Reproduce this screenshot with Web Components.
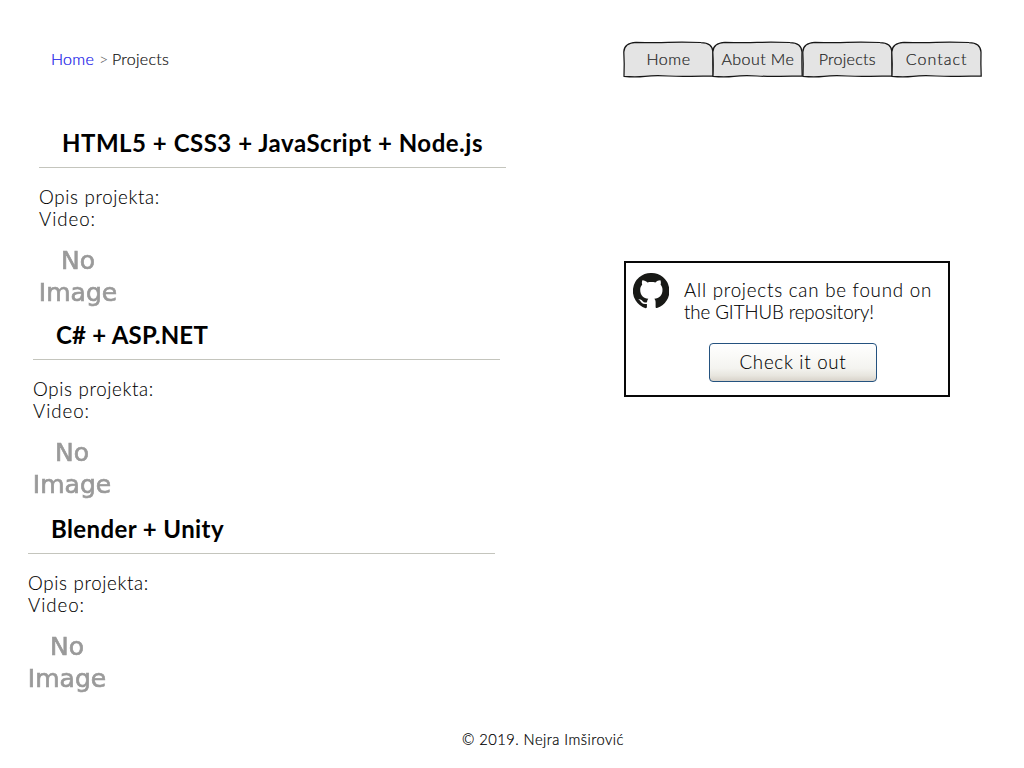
<!DOCTYPE html>
<html lang="en">
<head>
<meta charset="utf-8">
<title>Projects</title>
<style>
html,body{margin:0;background:#fff;color:#000;font-family:"Century Gothic",Lato,sans-serif;font-weight:300}
</style>
</head>
<body>
<projects-page></projects-page>
<script>
const define = (name, html, setup) => customElements.define(name, class extends HTMLElement {
  connectedCallback() {
    if (this.shadowRoot) return;
    this.attachShadow({ mode: 'open' }).innerHTML = html;
    if (setup) setup(this, this.shadowRoot);
  }
});

// A line of text whose tracking is adjusted so that it fills the given measure.
define('tracked-text', `<style>:host{display:inline-block;white-space:nowrap}span{display:inline-block}</style><span></span>`, (el, root) => {
  const s = root.querySelector('span');
  s.textContent = el.getAttribute('text');
  const w = Number(el.getAttribute('measure'));
  const natural = s.getBoundingClientRect().width;
  s.style.letterSpacing = (w - natural) / s.textContent.length + 'px';
  el.style.width = w + 'px';
});

define('nav-tab', `<style>
:host{display:block;width:89.4px;height:36px;flex:none}
div{display:grid;height:36px}
svg,span{grid-area:1/1}
svg{width:91px;height:36px;overflow:visible}
span{display:flex;justify-content:center;height:36px;line-height:36px;font-size:16px;font-weight:300;-webkit-text-stroke:.2px #222;color:#222;z-index:1}
</style><div><svg viewBox="0 0 91 36"><path d="M1 35.300Q1.500 22 .8 11Q1 2 13 1.300Q30 1.800 45 1.400T78 1.500Q89.500 1.500 90 11Q89.700 22 90.200 35.200Q78 34.900 68 35.300T45 35T22 35.300T1 35.300Z" fill="#e4e4e4" stroke="#161616" stroke-width="1.250"/></svg><span><slot></slot></span></div>`);

define('crumb-trail', `<style>
:host{display:flex;font-size:16px;line-height:20px;padding:8px 0 0 51px;font-weight:300}
a{color:#1212e8;text-decoration:none;-webkit-text-stroke:.2px #1212e8}i{font-style:normal;color:#555;margin:0 4px 0 5px}b{font-weight:300;color:#111;-webkit-text-stroke:.2px #111}
</style><a href="#"><tracked-text text="Home" measure="43"></tracked-text></a><i><tracked-text text="&gt;" measure="9"></tracked-text></i><b><tracked-text text="Projects" measure="57"></tracked-text></b>`);

define('no-image', `<style>
:host{display:block;width:78px;text-align:center;font:25px/31.500px "DejaVu Sans",sans-serif;color:#9a9a9a;-webkit-text-stroke:.7px #9a9a9a;filter:blur(.55px);white-space:nowrap}
div{margin:0 -4px}
</style><div>No</div><div>Image</div>`);

define('project-block', `<style>
:host{display:block;width:467px}
h2{margin:0;padding-left:23px;font-size:24px;line-height:28px;height:38px;font-weight:700}
hr{margin:0;border:0;height:1px;background:#c4c5bd}
p{margin:18px 0 15px;font-size:18.700px;line-height:22px;color:#000;-webkit-text-stroke:.1px #000}
p div{height:22px}
</style><h2><slot></slot></h2><hr><p></p><no-image></no-image>`, (el, root) => {
  root.querySelector('p').innerHTML = '<div><tracked-text text="Opis projekta:" measure="121"></tracked-text></div><div><tracked-text text="Video:" measure="57"></tracked-text></div>';
});

define('git-mark', `<style>:host{display:block;width:36px;height:36px;margin-right:1px}svg{display:block;width:36px;height:36px}</style>
<svg viewBox="0 0 36 36"><path fill="#181916" d="M18 0A18 18 0 0 0 12.600 35.200C13.500 35.200 13.900 34.700 13.900 34V30.900C9.500 31.800 8.200 29.400 7.500 28.300C7 27.500 6 26.600 5 26.300C7.800 25.700 8.900 27 10 28.600C11 29.800 12.600 29.700 14 29.200C14.100 27.800 14.600 26.500 15.300 25.800C10.500 25.100 7.200 22.700 7.200 16.800C7.200 14.600 7.900 13 9.200 11.700C8.700 10.200 8.800 8.600 9.400 7.300C11.200 7.200 12.900 8.300 14.400 9.400C16.800 8.800 20 8.800 22.400 9.400C24 8.200 25.600 7.200 27.400 7.300C28 8.800 28 10.300 27.600 11.700C28.800 13 29.500 14.700 29.500 16.800C29.500 22.700 26.200 25.100 21.300 25.800C22.200 26.700 22.600 27.900 22.600 29.600V34C22.600 34.800 23 35.200 24 35.100A18 18 0 0 0 18 0Z"/></svg>`);

define('repo-card', `<style>
:host{display:block;box-sizing:border-box;width:326px;height:136px;border:2px solid #080808;padding:10px 0 0 7px}
.row{display:flex;gap:14px}
.copy{padding-top:6px;font-size:18.700px;line-height:22px;color:#000;-webkit-text-stroke:.1px #000}
.copy div{height:22px}
button{display:flex;box-sizing:border-box;align-items:center;justify-content:center;width:168px;height:39px;margin:20px 0 0 76px;padding:0 0 2px;border:1px solid #24527f;border-radius:4px;background:linear-gradient(#fff,#f4f4f0 65%,#e8e6df 85%,#d8d3ca);font:300 18.700px "Century Gothic",Lato,sans-serif;color:#000;-webkit-text-stroke:.1px #000}
</style><div class="row"><git-mark></git-mark><div class="copy"><div><tracked-text text="All projects can be found on" measure="248"></tracked-text></div><div><tracked-text text="the GITHUB repository!" measure="190"></tracked-text></div></div></div><button><tracked-text text="Check it out" measure="107"></tracked-text></button>`);

define('projects-page', `<style>
:host{display:block;box-sizing:border-box;width:1024px;height:768px;padding-top:41px;overflow:hidden}
header{display:flex;height:88px}
crumb-trail{width:572px;flex:none;height:20px}
nav{display:flex}
main{display:flex;height:602px}
.list{width:624px;flex:none}
project-block:nth-child(1){margin-left:39px;height:192px}
project-block:nth-child(2){margin-left:33px;height:194px}
project-block:nth-child(3){margin-left:28px}
repo-card{margin-top:132px}
footer{font-size:14.700px;line-height:16px;color:#000;font-weight:300;-webkit-text-stroke:.2px #000;padding-left:462px}
</style>
<header><crumb-trail></crumb-trail><nav>
<nav-tab><tracked-text text="Home" measure="44"></tracked-text></nav-tab>
<nav-tab><tracked-text text="About Me" measure="73"></tracked-text></nav-tab>
<nav-tab><tracked-text text="Projects" measure="57"></tracked-text></nav-tab>
<nav-tab><tracked-text text="Contact" measure="62"></tracked-text></nav-tab></nav></header>
<main><div class="list">
<project-block><tracked-text text="HTML5 + CSS3 + JavaScript + Node.js" measure="421"></tracked-text></project-block>
<project-block><tracked-text text="C# + ASP.NET" measure="152"></tracked-text></project-block>
<project-block><tracked-text text="Blender + Unity" measure="173"></tracked-text></project-block>
</div><repo-card></repo-card></main>
<footer><tracked-text text="© 2019. Nejra Imširović" measure="162"></tracked-text></footer>`);
</script>
</body>
</html>
